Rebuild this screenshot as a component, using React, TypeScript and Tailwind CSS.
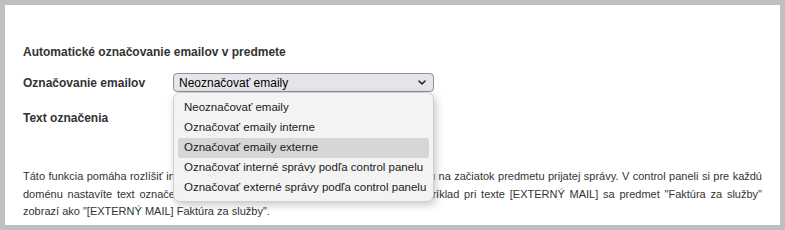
import React from 'react';

const options = [
  'Neoznačovať emaily',
  'Označovať emaily interne',
  'Označovať emaily externe',
  'Označovať interné správy podľa control panelu',
  'Označovať externé správy podľa control panelu',
];

const font = { fontFamily: '"Liberation Sans", Arial, sans-serif' };

export default function App() {
  const active = 2;

  return (
    <div className="w-[785px] h-[230px] bg-[#c0c0c0] p-[5px]" style={font}>
      <div className="h-full bg-white px-[18px] pt-[39px] text-[12px] text-[#333]">
        <h3 className="font-bold leading-[17px]">Automatické označovanie emailov v predmete</h3>

        <div className="mt-[12px] flex items-center h-[19px]">
          <label className="w-[150px] font-bold">Označovanie emailov</label>
          <div className="relative w-[261px]">
            <div className="h-[19px] flex items-center justify-between rounded-[4px] border border-[#8f8f9d] bg-[#e6e6ea] pl-[5px] pr-[7px] text-black">
              <span>Neoznačovať emaily</span>
              <svg width="8" height="5" viewBox="0 0 8 5" fill="none" stroke="#222" strokeWidth="1.6" strokeLinecap="round" strokeLinejoin="round">
                <path d="M1 1l3 3 3-3" />
              </svg>
            </div>
            <ul className="absolute left-0 top-[19px] z-10 w-[261px] rounded-[7px] border border-[#d0d0d0] bg-[#f3f3f3] px-[4px] pt-[5px] pb-[3px] shadow-[2px_3px_8px_rgba(0,0,0,0.22)] text-[11.5px] text-[#1a1a1a]">
              {options.map((o, i) => (
                <li
                  key={o}
                  className={
                    'h-[20px] flex items-center pl-[6px] rounded-[3px] whitespace-nowrap ' +
                    (i === active ? 'bg-[#d6d6d6]' : '')
                  }
                >
                  {o}
                </li>
              ))}
            </ul>
          </div>
        </div>

        <div className="mt-[16px] flex items-center h-[19px]">
          <label className="w-[150px] font-bold">Text označenia</label>
          <input className="w-[261px] h-[19px] border border-[#8f8f9d] rounded-[2px]" />
        </div>

        <div className="mt-[41px] text-[11px] leading-[17.5px] text-justify">
          <p className="[text-align-last:justify] whitespace-nowrap">
            Táto funkcia pomáha rozlíšiť interné a externé emaily pridaním identifikačného textu na začiatok predmetu prijatej správy. V control paneli si pre každú
          </p>
          <p className="[text-align-last:justify] whitespace-nowrap">
            doménu nastavíte text označenia osobitne pre interné a pre externé správy. Napríklad pri texte [EXTERNÝ MAIL] sa predmet "Faktúra za služby"
          </p>
          <p>zobrazí ako "[EXTERNÝ MAIL] Faktúra za služby".</p>
        </div>
      </div>
    </div>
  );
}
